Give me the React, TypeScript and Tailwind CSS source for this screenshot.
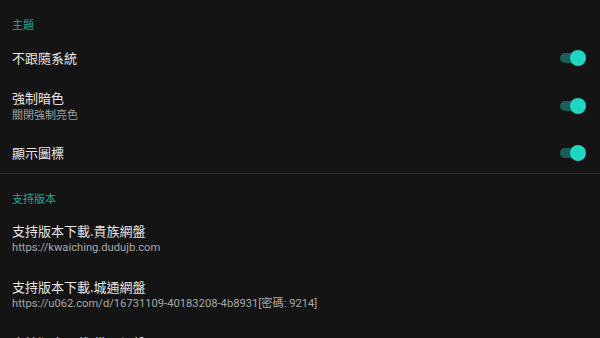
const font = { fontFamily: '"Noto Sans CJK TC", Roboto, "Noto Sans", sans-serif' }
const urlFont = { fontFamily: 'Roboto, "Noto Sans CJK TC", sans-serif' }

function Toggle() {
  return (
    <div className="relative w-[26px] h-[16px] flex items-center">
      <div className="w-[22px] h-[10px] rounded-full bg-[#1b5e58]" />
      <div className="absolute right-0 top-0 w-[16px] h-[16px] rounded-full bg-[#1fd6c3]" />
    </div>
  )
}

function Header({ text, h }: { text: string; h: string }) {
  return (
    <div className={`${h} shrink-0 pt-[14px] px-3`}>
      <div className="text-[11px] leading-[20px] text-[#22a896]">{text}</div>
    </div>
  )
}

function SwitchRow({ title, sub, h }: { title: string; sub?: string; h: string }) {
  return (
    <div className={`${h} shrink-0 flex items-center justify-between pl-3 pr-[14px]`}>
      <div className="flex flex-col">
        <div className="text-[13px] leading-[18px] text-[#e6e6e6]">{title}</div>
        {sub && <div className="text-[11px] leading-[15px] text-[#a3a3a3]">{sub}</div>}
      </div>
      <Toggle />
    </div>
  )
}

function LinkRow({ title, url }: { title: string; url: string }) {
  return (
    <div className="h-[56px] shrink-0 pt-[8px] px-3 flex flex-col">
      <div className="text-[13px] leading-[18px] text-[#e6e6e6]">{title}</div>
      <div className="text-[11.2px] leading-[15px] text-[#a8a8a8]" style={urlFont}>{url}</div>
    </div>
  )
}

export default function App() {
  return (
    <div className="w-[600px] h-[338px] overflow-hidden bg-[#141414] flex flex-col" style={font}>
      <Header text="主題" h="h-[34px]" />
      <SwitchRow title="不跟隨系統" h="h-[48px]" />
      <SwitchRow title="強制暗色" sub="關閉強制亮色" h="h-[47px]" />
      <div className="h-[44px] shrink-0 pt-[4px] flex flex-col">
        <SwitchRow title="顯示圖標" h="h-[40px]" />
      </div>
      <div className="h-[1px] shrink-0 bg-[#292929]" />
      <Header text="支持版本" h="h-[40px]" />
      <LinkRow title="支持版本下載.貴族網盤" url="https://kwaiching.dudujb.com" />
      <LinkRow title="支持版本下載.城通網盤" url="https://u062.com/d/16731109-40183208-4b8931[密碼: 9214]" />
      <LinkRow title="支持版本下載.備用網盤" url="https://" />
    </div>
  )
}
